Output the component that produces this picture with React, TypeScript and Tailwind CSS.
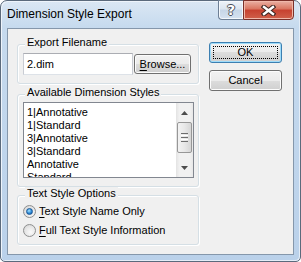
import React from "react";

function Group({ label, className, children }: { label: string; className?: string; children?: React.ReactNode }) {
  return (
    <div className={"relative rounded-[3px] border border-[#d5dfe5] shadow-[inset_1px_1px_0_#ffffff,1px_1px_0_#ffffff] " + (className || "")}>
      <span className="absolute left-[7px] -top-[9px] px-[2px] bg-[#f0f0f0] leading-[13px]">{label}</span>
      {children}
    </div>
  );
}

function Button({ children, isDefault, className }: { children: React.ReactNode; isDefault?: boolean; className?: string }) {
  return (
    <div
      className={
        "relative flex items-center justify-center rounded-[3px] border bg-[linear-gradient(#f2f2f2,#ebebeb_50%,#dddddd_50%,#cfcfcf)] " +
        (isDefault
          ? "border-[#3c7fb1] shadow-[inset_0_0_0_1px_#9fdcfa] "
          : "border-[#707070] shadow-[inset_0_0_0_1px_#fcfcfc] ") +
        (className || "")
      }
    >
      {isDefault && <span className="absolute inset-[3px] border border-dotted border-black" />}
      <span className="relative leading-[13px]">{children}</span>
    </div>
  );
}

function Radio({ checked }: { checked?: boolean }) {
  return (
    <div className="w-[13px] h-[13px] shrink-0 rounded-full border border-[#8e8f8f] bg-[radial-gradient(circle_at_60%_65%,#fafafa,#e6e6e6_55%,#cbcbcb)] flex items-center justify-center">
      {checked && (
        <div className="w-[7px] h-[7px] rounded-full border border-[#1a5796] bg-[radial-gradient(circle_at_40%_35%,#a6e4ff,#2d8ad6_55%,#0b4c97)]" />
      )}
    </div>
  );
}

function Tri({ up }: { up?: boolean }) {
  return (
    <svg width="7" height="4" viewBox="0 0 7 4">
      {up ? <polygon points="0,4 7,4 3.5,0" fill="#4d4d4d" /> : <polygon points="0,0 7,0 3.5,4" fill="#4d4d4d" />}
    </svg>
  );
}

const items = ["1|Annotative", "1|Standard", "3|Annotative", "3|Standard", "Annotative", "Standard"];

export default function App() {
  return (
    <div className="w-[301px] h-[262px] bg-white font-['Liberation_Sans',Arial,sans-serif] text-[11px] leading-[13px] text-black">
      <div className="flex flex-col w-[301px] h-[262px] rounded-t-[7px] rounded-b-[5px] border border-[#5b6a7c] bg-[linear-gradient(to_bottom,#dbe7f4,#c6daee_26px,#bad1ea)] shadow-[inset_1px_1px_0_#eef4fb,inset_-1px_-1px_0_#e4edf7]">
        <div className="h-[27px] flex items-start">
          <div className="pl-[6px] pt-[6px] text-[12px] leading-[15px]">Dimension Style Export</div>
          <div className="ml-auto mr-[6px] flex -mt-[1px]">
            <div className="w-[25px] h-[20px] rounded-bl-[4px] border border-[#6d7f95] border-r-0 bg-[linear-gradient(#eef3f9,#dbe5f0_45%,#c7d6e7_50%,#d5e2f0)] flex items-center justify-center shadow-[inset_0_0_0_1px_#f4f8fc]">
              <span className="text-white font-bold text-[14px] leading-[14px] font-['DejaVu_Sans',sans-serif] [text-shadow:1px_0_0_#4a4f58,-1px_0_0_#4a4f58,0_1px_0_#4a4f58,0_-1px_0_#4a4f58]">?</span>
            </div>
            <div className="w-[51px] h-[20px] rounded-br-[4px] border border-[#7b3029] bg-[linear-gradient(#eab0a3,#d9745f_45%,#c7412f_50%,#d0604a)] flex items-center justify-center shadow-[inset_0_0_0_1px_#f0b8aa]">
              <svg width="15" height="11" viewBox="0 0 15 11">
                <path d="M3 2 L12 9 M12 2 L3 9" stroke="#3d2521" strokeWidth="4.6" strokeLinecap="square" fill="none" />
                <path d="M3 2 L12 9 M12 2 L3 9" stroke="#ffffff" strokeWidth="2.4" strokeLinecap="square" fill="none" />
              </svg>
            </div>
          </div>
        </div>
        <div className="mx-[6px] h-[227px] border border-[#8597ab] bg-[#f0f0f0] flex pl-[9px]">
          <div className="w-[182px] flex flex-col">
            <Group label="Export Filename" className="mt-[15px] h-[40px] pl-[5px] pt-[8px]">
              <div className="flex items-center h-[22px]">
                <div className="w-[110px] h-[22px] bg-white border border-[#abadb3] border-x-[#c9ccd3] border-b-[#dde2e8] pl-[3px] flex items-center">
                  2.dim
                </div>
                <Button className="ml-[1px] w-[57px] h-[20px]">
                  <span className="underline underline-offset-[2px]">B</span>rowse...
                </Button>
              </div>
            </Group>
            <Group label="Available Dimension Styles" className="mt-[10px] h-[93px] pl-[5px] pt-[7px]">
              <div className="w-[171px] h-[76px] border border-[#828790] bg-white flex">
                <div className="flex-1 pl-[3px] pt-[3px] overflow-hidden">
                  {items.map((t) => (
                    <div key={t} className="leading-[13px] h-[13px] whitespace-nowrap">
                      {t}
                    </div>
                  ))}
                </div>
                <div className="w-[17px] flex flex-col bg-[linear-gradient(to_right,#e3e3e3,#f1f1f1_20%,#f1f1f1_80%,#e8e8e8)]">
                  <div className="h-[17px] flex items-center justify-center pt-[2px]">
                    <Tri up />
                  </div>
                  <div className="mt-[2px] mx-[1px] h-[31px] rounded-[2px] border border-[#979797] bg-[linear-gradient(to_right,#f3f3f3,#e8e8e8_50%,#d6d6d6)] flex flex-col items-center justify-center gap-[1px]">
                    <div className="w-[7px] h-[1px] bg-[#6e6e6e]" />
                    <div className="w-[7px] h-[1px] bg-[#ffffff]" />
                    <div className="w-[7px] h-[1px] bg-[#6e6e6e]" />
                    <div className="w-[7px] h-[1px] bg-[#ffffff]" />
                    <div className="w-[7px] h-[1px] bg-[#6e6e6e]" />
                  </div>
                  <div className="flex-1" />
                  <div className="h-[17px] flex items-center justify-center pb-[1px]">
                    <Tri />
                  </div>
                </div>
              </div>
            </Group>
            <Group label="Text Style Options" className="mt-[8px] h-[50px] pl-[5px] pt-[7px] flex flex-col gap-[2px]">
              <div className="h-[17px] flex items-center gap-[3px]">
                <Radio checked />
                <span>
                  <span className="underline underline-offset-[2px]">T</span>ext Style Name Only
                </span>
              </div>
              <div className="h-[17px] flex items-center gap-[3px]">
                <Radio />
                <span>
                  <span className="underline underline-offset-[2px]">F</span>ull Text Style Information
                </span>
              </div>
            </Group>
          </div>
          <div className="ml-[10px] pt-[13px] flex flex-col gap-[7px]">
            <Button isDefault className="w-[73px] h-[21px]">OK</Button>
            <Button className="w-[73px] h-[21px]">Cancel</Button>
          </div>
        </div>
      </div>
    </div>
  );
}
